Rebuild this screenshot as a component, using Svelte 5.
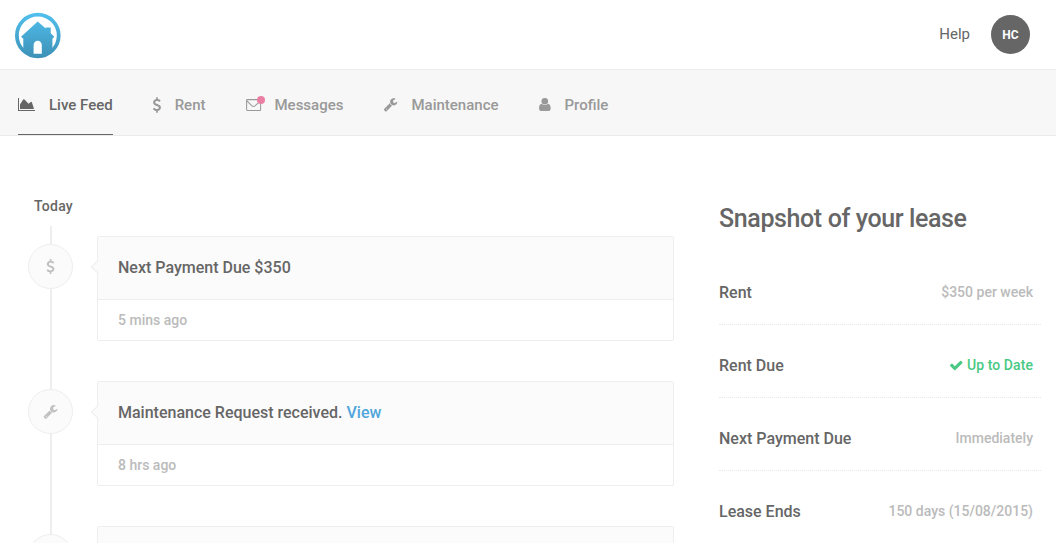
<script>
  const wrench = 'M448 1472q0-26-19-45t-45-19-45 19-19 45 19 45 45 19 45-19 19-45zm644-420l-682 682q-37 37-90 37-52 0-91-37l-106-108q-38-36-38-90 0-53 38-91l681-681q39 98 114.5 173.5t173.5 114.5zm634-435q0 39-23 106-47 134-164.5 217.5t-258.5 83.5q-185 0-316.5-131.5t-131.5-316.5 131.5-316.5 316.5-131.5q58 0 121.5 16.5t107.5 46.5q16 11 16 28t-16 28l-293 169v224l193 107q5-3 79-48.5t135.5-81 70.5-35.5q15 0 23.5 10t8.5 25z';
  const dollar = 'M1362 1185q0 153-99.5 263.5t-258.5 136.5v175q0 14-9 23t-23 9h-135q-13 0-22.5-9.5t-9.5-22.5v-175q-66-9-127.5-31t-101.5-44.5-74-48-46.5-37.5-17.5-18q-17-21-2-41l103-135q7-10 23-12 15-2 24 9l2 2q113 99 243 125 37 8 74 8 81 0 142.5-43t61.5-122q0-28-15-53t-33.5-42-58.5-37.5-66-32-80-32.5q-39-16-61.5-25t-61.5-26.5-62.5-31-56.5-35.5-53.5-42.5-43.5-49-35.5-58-21-66.5-8.5-78q0-138 98-242t255-134v-180q0-13 9.5-22.5t22.5-9.5h135q14 0 23 9t9 23v176q57 6 110.5 23t87 33.5 63.5 37.5 39 29 15 14q17 18 5 38l-81 146q-8 15-23 16-14 3-27-7-3-3-14.5-12t-39-26.5-58.5-32-74.5-26-85.5-11.5q-95 0-155 43t-60 111q0 26 8.5 48t29.5 41.5 39.5 33 56 31 60.5 27 70 27.5q53 20 81 31.5t76 35 75.5 42.5 62 50 53 63.5 31.5 76.5 13 94z';
  const check = 'M1671 566q0 40-28 68l-724 724-136 136q-28 28-68 28t-68-28l-136-136-362-362q-28-28-28-68t28-68l136-136q28-28 68-28t68 28l294 295 656-657q28-28 68-28t68 28l136 136q28 28 28 68z';

  const feed = [
    { icon: dollar, text: 'Next Payment Due $350', time: '5 mins ago' },
    { icon: wrench, text: 'Maintenance Request received.', link: 'View', time: '8 hrs ago' },
    { icon: dollar, text: '', time: '' }
  ];
  const lease = [
    { label: 'Rent', value: '$350 per week' },
    { label: 'Rent Due', value: 'Up to Date', ok: true },
    { label: 'Next Payment Due', value: 'Immediately' },
    { label: 'Lease Ends', value: '150 days (15/08/2015)' }
  ];
</script>

<div class="page">
  <header>
    <svg class="logo" width="48" height="48" viewBox="0 0 48 48">
      <defs>
        <linearGradient id="sky" gradientUnits="userSpaceOnUse" x1="0" y1="1" x2="0" y2="47">
          <stop offset="0" stop-color="#50c0ee" />
          <stop offset="1" stop-color="#3d90b5" />
        </linearGradient>
      </defs>
      <circle cx="23.8" cy="23.5" r="20.9" fill="none" stroke="url(#sky)" stroke-width="3.8" />
      <path fill="url(#sky)" d="M23.7 9.6 L31.7 16.4 V15.4 H36.7 V21.2 L40.300 24.800 L38.400 26.700 V37.500 L31 43.500 H16.500 L9.300 37.500 V26.700 L7 24.800 Z" />
      <path fill="#fff" d="M19.600 41.700V33a4.100 4.300 0 0 1 8.200 0V41.700z" />
    </svg>
    <div class="account">
      <a class="help" href="#help">Help</a>
      <span class="avatar">HC</span>
    </div>
  </header>

  <nav>
    <a class="active" href="#feed">
      <svg style:width="31px" height="16" viewBox="0 0 31 16" fill="currentColor"><path d="M0 1h1v12h16v1H0z" /><path d="M2 12V7.500L5.200 2.500Q5.800 2 6.500 2.600L10.500 6.800L12.800 5Q13.500 4.500 13.900 5.300L16 12z" /></svg>
      <span>Live Feed</span>
    </a>
    <a href="#rent">
      <svg style:width="22px" height="16" viewBox="0 0 22 16" fill="currentColor"><path transform="translate(-3.800 .3) scale(.0086)" d={dollar} /></svg>
      <span>Rent</span>
    </a>
    <a href="#messages">
      <svg style:width="29px" height="16" viewBox="0 0 29 16"><g fill="none" stroke="#999" stroke-width="1.050"><rect x=".6" y="2.600" width="14" height="10.800" rx=".7" /><path d="M.9 3.800L6 8.900Q7.500 10.100 9 8.900L14.500 3.800" /></g><circle cx="15" cy="3" r="4" fill="#ea7fa3" /></svg>
      <span>Messages</span>
    </a>
    <a href="#maintenance">
      <svg style:width="28px" height="16" viewBox="0 0 28 16" fill="currentColor"><path transform="translate(.3 .1) scale(.0081)" d={wrench} /></svg>
      <span>Maintenance</span>
    </a>
    <a href="#profile">
      <svg style:width="26px" height="16" viewBox="0 0 26 16" fill="currentColor"><circle cx="5.800" cy="4.300" r="3.300" /><path d="M2.500 6.800Q5.800 9.400 9.100 6.800Q11.700 7.500 11.700 11.500Q11.700 14 9.500 14H2.200Q0 14 0 11.500Q0 7.500 2.500 6.800Z" /></svg>
      <span>Profile</span>
    </a>
  </nav>

  <main>
    <section class="feed">
      <h2>Today</h2>
      <div class="timeline">
        {#each feed as item}
          <article>
            <div class="marker">
              <svg width="15" height="15" viewBox="0 0 1792 1792" fill="#c1c1c1"><path d={item.icon} /></svg>
            </div>
            <div class="card">
              <div class="message">{item.text}{#if item.link}{' '}<a href="#view">{item.link}</a>{/if}</div>
              <div class="time">{item.time}</div>
            </div>
          </article>
        {/each}
      </div>
    </section>

    <aside>
      <h1>Snapshot of your lease</h1>
      <dl>
        {#each lease as row}
          <div class="row">
            <dt>{row.label}</dt>
            <dd class:ok={row.ok}>
              {#if row.ok}<svg width="14.500" height="14.500" viewBox="0 0 1792 1792" fill="currentColor"><path d={check} /></svg>{/if}{row.value}
            </dd>
          </div>
        {/each}
      </dl>
    </aside>
  </main>
</div>

<style>
  .page { box-sizing: border-box; height: 543px; overflow: hidden; background: #fff; color: #666; font: 500 15px/20px Roboto, sans-serif; }
  .page :global(*) { box-sizing: border-box; }
  a { color: inherit; text-decoration: none; }
  svg { display: block; flex: none; overflow: visible; }
  header { height: 69px; display: flex; justify-content: space-between; padding: 12px 26px 0 14px; }
  .account { display: flex; align-items: flex-start; gap: 21px; padding-top: 3px; }
  .help { font-weight: 400; padding-top: 9px; }
  .avatar { width: 39px; height: 39px; border-radius: 50%; background: #666; color: #fff; font-size: 12px; font-weight: 700; line-height: 40px; text-align: center; }
  nav { height: 67px; display: flex; gap: 40px; padding-left: 18px; background: #f7f7f7; border: solid #ebebeb; border-width: 1px 0; color: #999; }
  nav a { height: 65px; display: flex; align-items: center; padding-top: 5px; }
  nav a.active { color: #666; border-bottom: 1px solid #666; }
  main { display: flex; justify-content: space-between; padding-right: 15px; }
  .feed { width: 674px; padding: 60px 0 0 28px; }
  h2 { margin: 0 0 10px 6px; font-size: 14px; line-height: 20px; font-weight: 500; letter-spacing: .25px; }
  .timeline { padding-top: 10px; background: linear-gradient(#eee, #eee) 22px 0 / 2px 100% no-repeat; }
  article { display: flex; gap: 24px; height: 145px; }
  .marker { width: 45px; height: 45px; margin-top: 8px; border: 1px solid #eee; border-radius: 50%; background: #fbfbfb; display: grid; place-items: center; }
  .card { position: relative; width: 577px; height: 105px; border: 1px solid #eee; border-radius: 2px; }
  .card::before { content: ''; position: absolute; left: -5px; top: 25px; width: 9px; height: 9px; background: #fbfbfb; border: solid #eee; border-width: 0 0 1px 1px; transform: rotate(45deg); }
  .message { height: 63px; padding: 21px 20px; background: #fbfbfb; border-bottom: 1px solid #eee; font-size: 16px; }
  .message a { color: #4fa6dc; }
  .time { padding: 10px 20px; font-size: 14px; color: #bbb; }
  aside { width: 322px; padding-top: 66px; }
  h1 { margin: 0; font-size: 25px; line-height: 34px; font-weight: 500; letter-spacing: -.38px; }
  dl { margin: 16px 0 0; }
  .row { height: 73px; display: flex; align-items: center; justify-content: space-between; padding: 9px 8px 0 0; border-bottom: 1px dotted #e8e8e8; }
  .row:last-child { border-color: transparent; }
  dt { font-size: 16px; }
  dd { margin: -1px 0 0; display: flex; align-items: center; gap: 3px; font-size: 14px; color: #bbb; }
  dd.ok { color: #49c983; letter-spacing: .08px; }
</style>
